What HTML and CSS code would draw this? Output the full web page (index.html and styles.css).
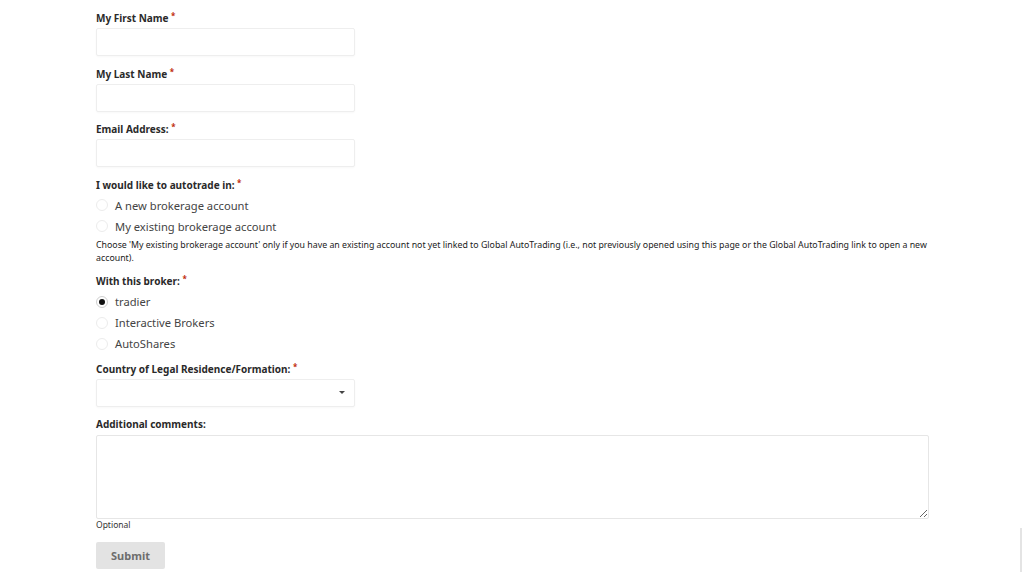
FILE: index.html
```html
<!DOCTYPE html>
<html lang="en">
<head>
<meta charset="utf-8">
<title>Form</title>
<link rel="stylesheet" href="styles.css">
</head>
<body>
<form class="form">
  <div class="field">
    <label class="label">My First Name <span class="req">*</span></label>
    <input class="input" type="text">
  </div>
  <div class="field">
    <label class="label">My Last Name <span class="req">*</span></label>
    <input class="input" type="text">
  </div>
  <div class="field">
    <label class="label">Email Address: <span class="req">*</span></label>
    <input class="input" type="text">
  </div>
  <div class="field field-radio">
    <div class="label">I would like to autotrade in: <span class="req">*</span></div>
    <div class="choice"><span class="radio"></span><span class="choice-text">A new brokerage account</span></div>
    <div class="choice"><span class="radio"></span><span class="choice-text">My existing brokerage account</span></div>
    <div class="help">Choose 'My existing brokerage account' only if you have an existing account not yet linked to Global AutoTrading (i.e., not previously opened using this page or the Global AutoTrading link to open a new account).</div>
  </div>
  <div class="field field-radio field-broker">
    <div class="label">With this broker: <span class="req">*</span></div>
    <div class="choice"><span class="radio checked"></span><span class="choice-text">tradier</span></div>
    <div class="choice"><span class="radio"></span><span class="choice-text">Interactive Brokers</span></div>
    <div class="choice"><span class="radio"></span><span class="choice-text">AutoShares</span></div>
  </div>
  <div class="field field-country">
    <label class="label">Country of Legal Residence/Formation: <span class="req">*</span></label>
    <div class="select"><span class="caret"></span></div>
  </div>
  <div class="field field-wide">
    <label class="label">Additional comments:</label>
    <textarea class="textarea"></textarea>
    <div class="optional">Optional</div>
  </div>
  <button type="button" class="submit">Submit</button>
</form>
<div class="edge-bar"></div>
</body>
</html>
```
FILE: styles.css
```css
html, body {
  margin: 0;
  padding: 0;
  background: #ffffff;
}
body {
  font-family: "Noto Sans", "Open Sans", sans-serif;
  color: #333;
  width: 1024px;
  height: 576px;
  overflow: hidden;
}
.form {
  padding: 8px 0 0 96px;
  width: 833px;
}
.field {
  display: flex;
  flex-direction: column;
  margin-bottom: 7.5px;
}
.label {
  font-size: 10px;
  font-weight: 700;
  line-height: 16px;
  height: 16px;
  color: #2a2a2a;
  margin-bottom: 4px;
  white-space: nowrap;
}
.req {
  color: #c02b0a;
  font-size: 8px;
  vertical-align: 3px;
  margin-left: 0;
}
.input, .select {
  box-sizing: border-box;
  width: 259px;
  height: 28px;
  border: 1px solid #eeeeee;
  border-radius: 2px;
  background: #fff;
  box-shadow: 0 1px 2px rgba(0,0,0,0.03);
  margin: 0;
  padding: 0 8px;
}
.select {
  display: flex;
  align-items: center;
  justify-content: flex-end;
  padding-right: 9px;
}
.caret {
  width: 0;
  height: 0;
  border-left: 3px solid transparent;
  border-right: 3px solid transparent;
  border-top: 3px solid #444;
}
.choice {
  display: flex;
  align-items: center;
  height: 21px;
}
.radio {
  box-sizing: border-box;
  width: 12px;
  height: 12px;
  border-radius: 50%;
  border: 1px solid #ececec;
  margin-right: 7px;
  display: flex;
  align-items: center;
  justify-content: center;
}
.radio.checked {
  border-color: #cfcfcf;
}
.radio.checked::after {
  content: "";
  width: 6px;
  height: 6px;
  border-radius: 50%;
  background: #111;
}
.choice-text {
  font-size: 11.2px;
  color: #444;
}
.help {
  font-size: 8.8px;
  line-height: 13px;
  color: #222;
  margin-top: 2px;
  margin-bottom: -1px;
}
.field-broker {
  margin-bottom: 4.5px;
}
.field-country {
  margin-bottom: 9.5px;
}
.field-wide .label {
  margin-bottom: 3px;
}
.textarea {
  box-sizing: border-box;
  width: 833px;
  height: 84px;
  border: 1px solid #e6e6e6;
  border-radius: 2px;
  margin: 0;
  resize: vertical;
  font-family: inherit;
}
.optional {
  font-size: 8.5px;
  line-height: 12px;
  color: #333;
}
.submit {
  margin-top: 3px;
  width: 69px;
  height: 27px;
  border: none;
  border-radius: 2px;
  background: #e3e3e3;
  color: #6d6d6d;
  font-family: inherit;
  font-size: 11px;
  font-weight: 700;
  padding: 0;
}
.edge-bar {
  position: fixed;
  right: 2px;
  top: 528px;
  width: 2px;
  height: 44px;
  background: #e4e4e4;
}
```
